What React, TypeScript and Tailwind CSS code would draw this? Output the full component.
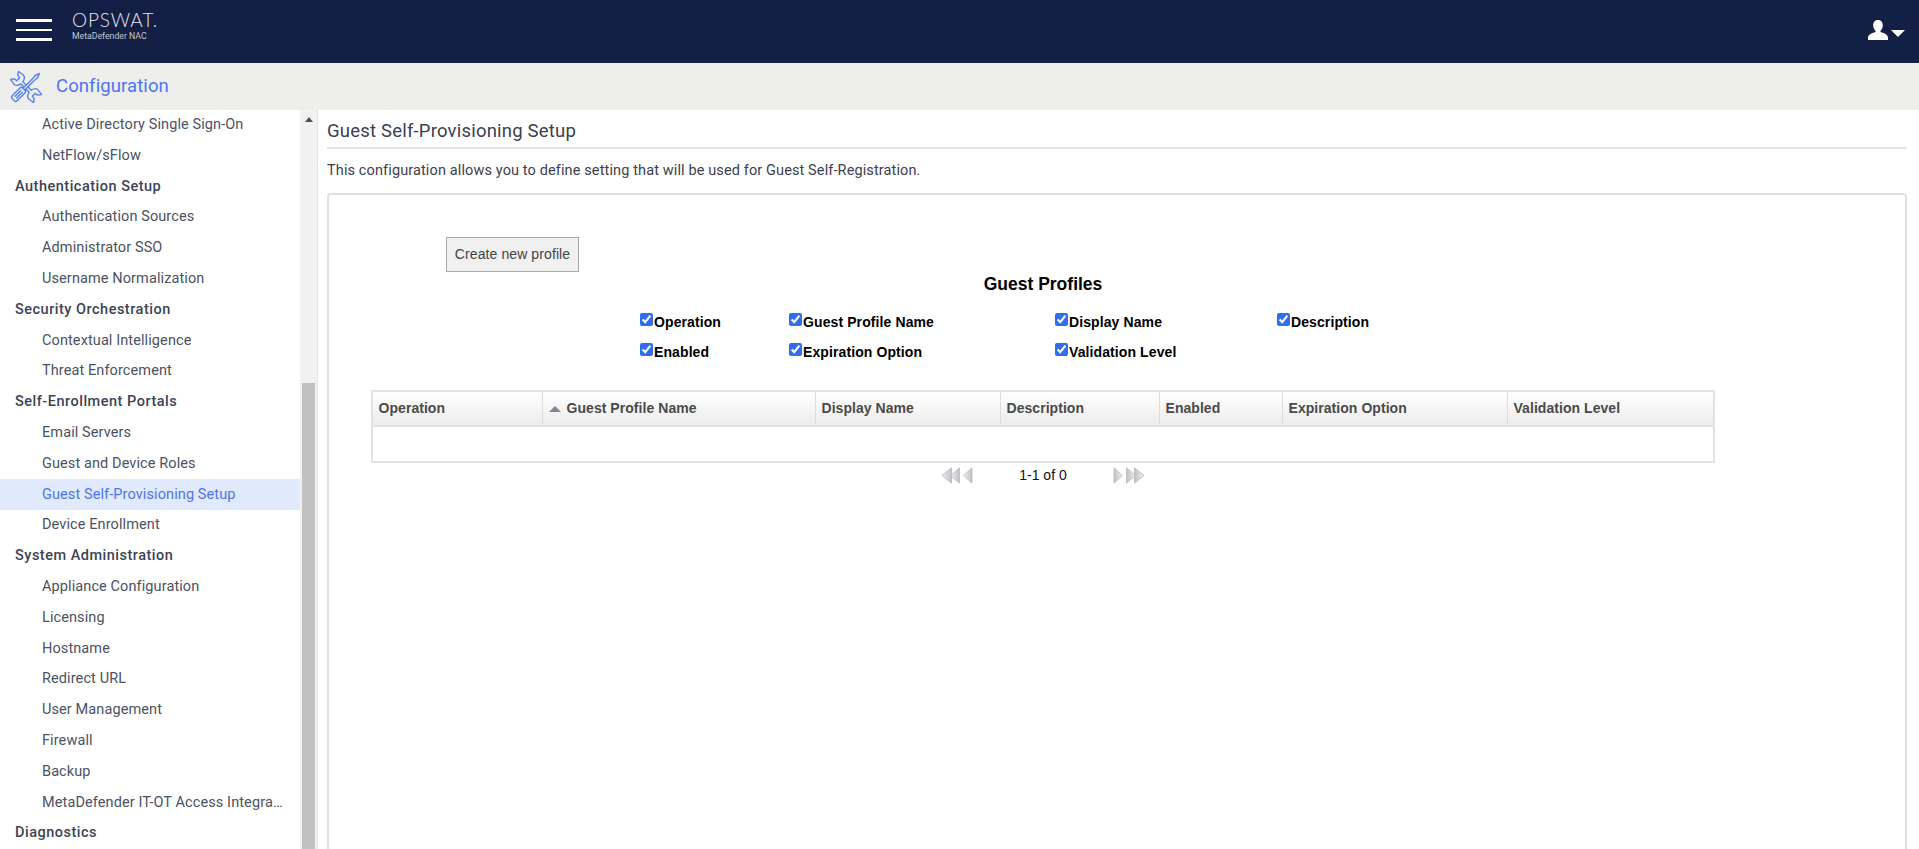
const SIDEBAR_ITEMS: { label: string; section?: boolean; active?: boolean }[] = [
  { label: 'Active Directory Single Sign-On' },
  { label: 'NetFlow/sFlow' },
  { label: 'Authentication Setup', section: true },
  { label: 'Authentication Sources' },
  { label: 'Administrator SSO' },
  { label: 'Username Normalization' },
  { label: 'Security Orchestration', section: true },
  { label: 'Contextual Intelligence' },
  { label: 'Threat Enforcement' },
  { label: 'Self-Enrollment Portals', section: true },
  { label: 'Email Servers' },
  { label: 'Guest and Device Roles' },
  { label: 'Guest Self-Provisioning Setup', active: true },
  { label: 'Device Enrollment' },
  { label: 'System Administration', section: true },
  { label: 'Appliance Configuration' },
  { label: 'Licensing' },
  { label: 'Hostname' },
  { label: 'Redirect URL' },
  { label: 'User Management' },
  { label: 'Firewall' },
  { label: 'Backup' },
  { label: 'MetaDefender IT-OT Access Integration' },
  { label: 'Diagnostics', section: true },
];

const COLUMNS = [
  { label: 'Operation', width: 'w-[170px]' },
  { label: 'Guest Profile Name', width: 'w-[273px]', sorted: true },
  { label: 'Display Name', width: 'w-[185px]' },
  { label: 'Description', width: 'w-[159px]' },
  { label: 'Enabled', width: 'w-[123px]' },
  { label: 'Expiration Option', width: 'w-[225px]' },
  { label: 'Validation Level', width: 'flex-1' },
];

const CHECKS = [
  'Operation',
  'Guest Profile Name',
  'Display Name',
  'Description',
  'Enabled',
  'Expiration Option',
  'Validation Level',
];

function ToolsIcon() {
  return (
    <svg width="32" height="32" viewBox="0 0 32 32" fill="none" stroke="#5580f5" strokeWidth="1.4" strokeLinejoin="round">
      <path
        transform="rotate(-45 16 16)"
        d="M14.500 10C11.500 9.500 9.500 8 9.500 5.500L10.300-.5 13.500 2 14 5H18L18.500 2 21.700-.5 22.500 5.500C22.500 8 20.500 9.500 17.500 10V22C20.500 22.500 22.500 24 22.500 26.500L21.700 32.500 18.500 30 18 27H14L13.500 30 10.300 32.500 9.500 26.500C9.500 24 11.500 22.500 14.500 22z"
      />
      <g transform="rotate(45 16 16)" fill="#eeeeed">
        <path d="M14.800 6L14.400 1 16-3 17.600 1 17.200 6V19H14.800z" />
        <rect x="12.500" y="19" width="7" height="15" rx="2" />
        <path d="M14.800 22V31M17.200 22V31" />
      </g>
    </svg>
  );
}

function Pager({ next }: { next?: boolean }) {
  const id = next ? 'pager-next' : 'pager-prev';
  return (
    <svg width="32" height="17" viewBox="0 0 32 17" className={next ? '' : 'rotate-180'}>
      <defs>
        <linearGradient id={id} x1="0" x2="1">
          <stop offset="0" stopColor="#c0c0c6" />
          <stop offset="1" stopColor="#f2f2f2" />
        </linearGradient>
      </defs>
      <g fill={`url(#${id})`} stroke="#b9b9be" strokeWidth="0.8" strokeLinejoin="round">
        <path d="M1 .8l8.500 7.700L1 16.200z" />
        <path d="M13.500 .8l9 7.700-9 7.700z" />
        <path d="M21.500 .8l9.500 7.700-9.500 7.700z" />
      </g>
    </svg>
  );
}

export default function App() {
  return (
    <div className="h-[849px] overflow-hidden bg-white font-['Roboto',sans-serif]">
      <header className="flex h-[63px] items-start justify-between bg-[#141f45]">
        <div className="flex">
          <div className="ml-4 mt-[19px] flex w-9 flex-col gap-[7px]">
            <span className="h-[2.5px] bg-white" />
            <span className="h-[2.5px] bg-white" />
            <span className="h-[2.5px] bg-white" />
          </div>
          <div className="ml-5 mt-[9px]">
            <div className="font-['Lato',sans-serif] text-[19px] font-light leading-[21px] tracking-[0.9px] text-[#e4e6ec]">OPSWAT.</div>
            <div className="text-[8.7px] leading-[12px] text-[#c4c7d0]">MetaDefender NAC</div>
          </div>
        </div>
        <div className="mr-[14px] mt-[20px] flex items-center gap-[3px]">
          <svg width="20" height="20" viewBox="0 0 20 20" fill="white">
            <path d="M10 0c3 0 4.800 2.200 4.800 5.500 0 2.300-1 4-2.300 5.200v1.300c3 1 7 2 7.500 5.500V20H0v-2.500c.5-3.500 4.500-4.500 7.500-5.500v-1.300C6.200 9.500 5.200 7.800 5.200 5.500 5.200 2.200 7 0 10 0z" />
          </svg>
          <span className="mt-[7px] h-0 w-0 border-x-[7px] border-t-[7px] border-x-transparent border-t-white" />
        </div>
      </header>

      <div className="flex h-[47px] items-center bg-[#eeeeed]">
        <div className="ml-[10px]">
          <ToolsIcon />
        </div>
        <span className="ml-[14px] text-[18.5px] tracking-[0.1px] text-[#4d74f5]">Configuration</span>
      </div>

      <div className="flex h-[739px]">
        <aside className="flex w-[318px] shrink-0 border-r border-[#e4e4e4]">
          <nav className="w-[300px] overflow-hidden">
            <ul className="-mt-[0.5px]">
              {SIDEBAR_ITEMS.map((item) => (
                <li
                  key={item.label}
                  className={`flex h-[30.8px] items-center text-[14.5px] ${
                    item.section
                      ? 'pl-[15px] font-medium tracking-[0.5px] text-[#3c4356]'
                      : item.active
                        ? 'bg-[#e0eafc] pl-[42px] tracking-[0.1px] text-[#4d74f5]'
                        : 'pl-[42px] tracking-[0.1px] text-[#4b5263]'
                  }`}
                >
                  <span className={item.section ? '' : 'block max-w-[242px] truncate'}>{item.label}</span>
                </li>
              ))}
            </ul>
          </nav>
          <div className="flex w-[17px] flex-col items-center bg-[#f1f1f1]">
            <span className="mt-[7px] h-0 w-0 border-x-[4px] border-b-[5px] border-x-transparent border-b-[#505050]" />
            <span className="mt-[261px] w-[13px] flex-1 bg-[#c1c1c1]" />
          </div>
        </aside>

        <main className="flex-1 pl-[9px] pr-3 text-[#3c4050]">
          <h1 className="flex h-[39px] items-center border-b-2 border-[#e4e4e4] pt-[5px] text-[18.5px] leading-none tracking-[0.2px]">
            Guest Self-Provisioning Setup
          </h1>
          <p className="mt-[12px] text-[14.5px] leading-[20px] tracking-[0.12px]">
            This configuration allows you to define setting that will be used for Guest Self-Registration.
          </p>
          <div className="mt-[12px] h-[700px] rounded border-2 border-[#e0e0e0] font-['Liberation_Sans',sans-serif]">
            <div className="ml-[117px] mt-[42px] flex h-[35px] w-[133px] items-center justify-center border border-[#aaaaaa] bg-[#f0f0f0] text-[14px] tracking-[0.1px] text-[#444444]">
              Create new profile
            </div>
            <h2 className="ml-[42px] mt-[2px] w-[1344px] text-center text-[17.5px] font-bold leading-[20px] text-black">
              Guest Profiles
            </h2>
            <div className="ml-[311px] mt-[19px] grid grid-cols-[149px_266px_222px_auto] gap-y-[13px]">
              {CHECKS.map((label) => (
                <label key={label} className="flex h-[17px] items-start text-[14px] font-bold leading-[16px] tracking-[0.1px] text-black">
                  <input type="checkbox" checked readOnly className="m-0 mr-[1px] h-[13px] w-[13px] accent-[#2f6fed]" />
                  <span className="mt-[1px]">{label}</span>
                </label>
              ))}
            </div>
            <div className="ml-[42px] mt-[30px] w-[1344px] border-2 border-[#e2e2e2]">
              <div className="flex h-[35px] border-b-2 border-[#e2e2e2] bg-gradient-to-b from-white to-[#ececec]">
                {COLUMNS.map((col, i) => (
                  <div
                    key={col.label}
                    className={`flex items-center px-[5.5px] text-[14px] font-bold tracking-[0.05px] text-[#4a4a4a] ${col.width} ${
                      i < COLUMNS.length - 1 ? 'border-r border-[#dddddd]' : ''
                    }`}
                  >
                    {col.sorted && (
                      <span className="mr-[6px] h-0 w-0 border-x-[6px] border-b-[6px] border-x-transparent border-b-[#7f8599]" />
                    )}
                    {col.label}
                  </div>
                ))}
              </div>
              <div className="h-[34px]" />
            </div>
            <div className="ml-[42px] flex w-[1344px] items-center justify-center pt-[2px] text-[14px] text-[#111111]">
              <Pager />
              <span className="mx-[46px]">1-1 of 0</span>
              <Pager next />
            </div>
          </div>
        </main>
      </div>
    </div>
  );
}
